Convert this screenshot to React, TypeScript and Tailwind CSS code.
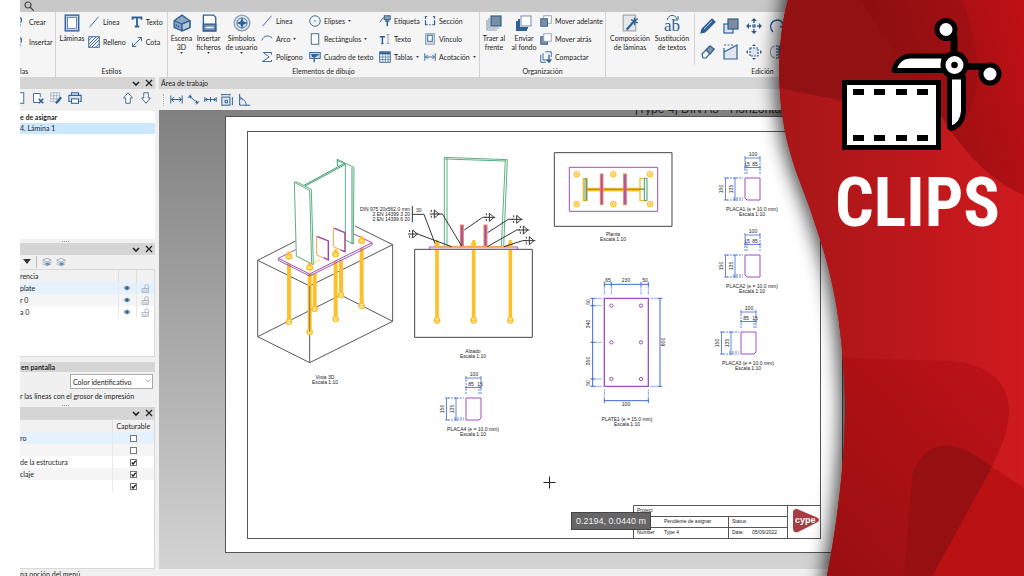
import React from 'react';

const BLUE = '#2f6096';
const SOFT = '#8c9fb5';

const glyphs: Record<string, React.ReactNode> = {
  create: (
    <>
      <path d="M2 1h6v5H2M8 3h2v5H2M2 10h6v4H2" />
      <path d="M2 8h6" />
    </>
  ),
  sheet: (
    <>
      <rect x="2" y="1" width="12" height="14" fill="#c6d3e2" />
      <rect x="4" y="3" width="8" height="10" fill="#fff" strokeWidth="0.6" />
    </>
  ),
  line: <path d="M2 15L14 1" />,
  hatch: (
    <>
      <rect x="1" y="1" width="14" height="14" />
      <path d="M1 6l5-5M1 11L11 1M1 15L15 1M5 15L15 5M10 15l5-5" />
    </>
  ),
  textT: <path d="M2 5V2h12v3M8 2v12M5 14h6" strokeWidth="2.4" />,
  arrows: <path d="M2 14L14 2M2 9v5h5M9 2h5v5" />,
  scene: (
    <>
      <path d="M1 6l7-5 7 5v6l-7 3-7-3z" fill="#8aa6c2" />
      <path d="M1 6l7 3 7-3M8 9v6M3 9v2M5 10v2" />
      <path d="M8 9l7-3v6l-7 3z" fill="#b7c8da" />
    </>
  ),
  file: (
    <>
      <path d="M3 1h9l2 2v12H3z" fill="#fff" />
      <rect x="3" y="9" width="11" height="6" fill="#6f8fb3" />
      <path d="M5 12h7" stroke="#fff" />
    </>
  ),
  compass: (
    <>
      <circle cx="8" cy="8" r="7" stroke={SOFT} fill="#dbe3ec" />
      <circle cx="8" cy="8" r="4.5" strokeWidth="0.7" />
      <path d="M8 3l1.400 3.600L13 8l-3.600 1.400L8 13l-1.400-3.600L3 8l3.600-1.400z" fill={BLUE} stroke="none" />
    </>
  ),
  arc: <path d="M1 10c3-7 9-8 14-3" />,
  polygon: <path d="M14 5V2H3l8 6-9 6h12v-2" />,
  ellipse: (
    <>
      <circle cx="8" cy="8" r="7" />
      <circle cx="8" cy="8" r="1" fill={BLUE} stroke="none" />
    </>
  ),
  rect: <rect x="3" y="1" width="10" height="14" fill="#fff" />,
  textbox: (
    <>
      <rect x="1" y="2" width="14" height="8" fill="#c9d6e4" />
      <path d="M3 5h10M7 15V7M4 7h6" strokeWidth="1.800" />
    </>
  ),
  tag: (
    <>
      <rect x="7" y="1" width="8" height="5" fill={SOFT} />
      <path d="M1 10l4-6h2" />
      <path d="M11 15V8M8 8h6" strokeWidth="2" />
    </>
  ),
  textI: (
    <>
      <path d="M1 5h7M4.500 5v9M3 14h3" strokeWidth="2" />
      <path d="M12 2v12M10 2h4M10 14h4" stroke={SOFT} />
    </>
  ),
  table: (
    <>
      <rect x="1" y="1" width="14" height="14" fill="#fff" />
      <path d="M1 3h14" strokeWidth="3" />
      <path d="M1 8h14M1 11.500h14M5 3v12M8.500 3v12M12 3v12" strokeWidth="0.8" />
    </>
  ),
  section: <path d="M4 2H2v3M12 2h2v3M2 7v6h3M14 7v6h-3M7 13h2" strokeWidth="1.600" />,
  link: (
    <>
      <rect x="2" y="1" width="12" height="14" fill="#cbd6e2" stroke={SOFT} />
      <rect x="5" y="3" width="6" height="8" fill="#fff" />
    </>
  ),
  dim: <path d="M1 3v10M15 3v10M2 8h12M5 5L2 8l3 3M11 5l3 3-3 3" />,
  front: (
    <>
      <path d="M1 5v10h10M3 3v10h10" stroke={SOFT} />
      <rect x="5" y="1" width="10" height="10" fill="#7d8c9f" />
    </>
  ),
  back: (
    <>
      <rect x="5" y="1" width="10" height="10" fill="#fff" stroke={SOFT} />
      <path d="M3 4v9h9M1 6v9h10" strokeWidth="2" />
    </>
  ),
  forward: (
    <>
      <rect x="5" y="1" width="10" height="10" fill="#fff" stroke={SOFT} />
      <rect x="1" y="5" width="9" height="10" fill="#7d8c9f" />
    </>
  ),
  backward: (
    <>
      <rect x="1" y="5" width="9" height="10" fill="#7d8c9f" />
      <rect x="5" y="1" width="10" height="10" fill="#fff" stroke={SOFT} />
    </>
  ),
  compact: (
    <>
      <path d="M1 5v10h7M4 3v9h5M7 1h8v7" />
      <path d="M12 5v8M9 11l3 4 3-4" strokeWidth="1.800" />
    </>
  ),
  compose: (
    <>
      <rect x="2" y="1" width="11" height="14" fill="#e5e7ea" stroke="#a9adb3" />
      <path d="M5 14l6-7" strokeWidth="2" />
      <path d="M12 3v7M9 5l6 3M15 4l-5 4" />
    </>
  ),
  pencil: (
    <>
      <path d="M1 15l1-4L12 1l3 3L5 14z" fill={BLUE} />
      <path d="M4 11l8-8" stroke="#fff" strokeWidth="0.700" />
    </>
  ),
  copy: (
    <>
      <rect x="1" y="6" width="9" height="9" fill="#dfe5ec" />
      <rect x="5" y="1" width="10" height="10" fill="#7d8c9f" />
    </>
  ),
  move: (
    <>
      <path d="M8 1v4M8 11v4M1 8h4M11 8h4" strokeWidth="1.500" />
      <path d="M8 0l3 3H5zM8 16l3-3H5zM0 8l3-3v6zM16 8l-3-3v6z" fill={BLUE} stroke="none" />
      <rect x="7" y="7" width="2" height="2" />
    </>
  ),
  rotate: <path d="M4 14C0 10 1 3 8 2c5 0 7 4 6 8M11 8l3 2 2-3" strokeWidth="1.400" />,
  eraser: (
    <>
      <path d="M2 10L10 2l4 3-8 9H3z" fill="#fff" />
      <path d="M6 6l4-4 4 3-4 5z" fill="#8795a6" />
    </>
  ),
  stretch: (
    <>
      <path d="M1 4v11h13V1L1 8" fill="#dfe5ec" />
      <path d="M1 1h10" strokeDasharray="2 1.500" />
    </>
  ),
  scale: (
    <>
      <rect x="4" y="4" width="8" height="8" strokeDasharray="2 1" fill="#dfe5ec" />
      <path d="M8 0l2 2H6zM8 16l2-2H6zM0 8l2-2v4zM16 8l-2-2v4z" fill={BLUE} stroke="none" />
    </>
  ),
  mirror: (
    <>
      <path d="M6 2C0 3 0 13 6 14" stroke={SOFT} />
      <path d="M8 1v14" strokeDasharray="2 1" />
      <path d="M10 2c6 1 6 11 0 12z" fill={BLUE} />
    </>
  ),
  sheetX: (
    <>
      <path d="M9 14H2V2h9v5" fill="#fff" />
      <path d="M9 9l6 6M15 9l-6 6" strokeWidth="2.200" />
    </>
  ),
  sheetEdit: (
    <>
      <path d="M1 1h12v12H1zM1 5h12M1 9h12M5 1v12M9 1v12" stroke={SOFT} strokeWidth="0.800" />
      <path d="M8 15l7-8" strokeWidth="3" />
    </>
  ),
  printer: (
    <>
      <path d="M4 5V2h8v3M3 12H1V5h14v7h-2" fill="#dfe5ec" />
      <rect x="4" y="9" width="8" height="5" fill="#fff" />
    </>
  ),
  up: <path d="M8 1l6 7h-3v7H5V8H2z" fill="#fff" />,
  down: <path d="M8 15l6-7h-3V1H5v7H2z" fill="#fff" />,
  aligned: (
    <>
      <path d="M3 4l10 8M1 6l4-4M11 14l4-4" />
      <path d="M2 3l4 1-2 3zM14 13l-4-1 2-3z" fill={BLUE} stroke="none" />
    </>
  ),
  chain: <path d="M1 5v6M8 5v6M15 5v6M1 8h14M4 6L2 8l2 2M12 6l2 2-2 2" />,
  boxDim: (
    <>
      <rect x="1" y="5" width="10" height="10" fill="#dfe5ec" />
      <path d="M1 2h10M1 1v2M11 1v2M14 5v10M5 9h3v3H5z" />
    </>
  ),
  angle: <path d="M2 1v14h13M2 7c5 0 8 3 8 8M2 4l4 4" />,
  layers: (
    <>
      <path d="M1 5l7-3 7 3-7 3zM1 8l7 3 7-3M1 11l7 3 7-3" stroke={SOFT} />
      <path d="M6 9h6v4H6z" fill={BLUE} stroke="none" opacity="0.600" />
    </>
  ),
  eye: (
    <>
      <path d="M1 8c3-5 11-5 14 0-3 5-11 5-14 0z" fill="#c4d1df" stroke={SOFT} />
      <circle cx="8" cy="8" r="3" fill={BLUE} />
    </>
  ),
  lock: (
    <>
      <path d="M2 8h11v7H2zM7 8V4c0-4 6-4 6 0v4" stroke="#8c9aab" fill="none" />
      <path d="M4 11h7v2H4z" stroke="#b8c2cd" />
    </>
  ),
};

interface IconProps {
  name: string;
  className?: string;
}

const Icon: React.FC<IconProps> = ({ name, className = 'size-3' }) => (
  <svg
    viewBox="0 0 16 16"
    className={`${className} shrink-0`}
    fill="none"
    stroke={BLUE}
    strokeWidth="1.200"
    aria-hidden="true"
  >
    {glyphs[name]}
  </svg>
);

const Caret = () => (
  <svg viewBox="0 0 4 3" className="h-[2px] w-[3px] shrink-0" aria-hidden="true">
    <path d="M0 0h4L2 3z" fill="#333" />
  </svg>
);

interface ToolProps {
  icon: string;
  label: string;
  menu?: boolean;
}

const Tool: React.FC<ToolProps> = ({ icon, label, menu }) => (
  <button type="button" className="flex h-[18px] items-center gap-[3px] whitespace-nowrap">
    <Icon name={icon} />
    {label}
    {menu && <Caret />}
  </button>
);

interface BigToolProps {
  icon: React.ReactNode;
  lines: string[];
  menu?: boolean;
  className: string;
}

const BigTool: React.FC<BigToolProps> = ({ icon, lines, menu, className }) => (
  <button
    type="button"
    className={`flex h-12 flex-col items-center whitespace-nowrap pt-[2px] leading-[9px] ${className}`}
  >
    <span className="mb-[2px] flex h-[18px] items-center">{icon}</span>
    {lines.map((line) => (
      <span key={line}>{line}</span>
    ))}
    {menu && <Caret />}
  </button>
);

interface GroupProps {
  label: string;
  className: string;
  children: React.ReactNode;
}

const Group: React.FC<GroupProps> = ({ label, className, children }) => (
  <section
    className={`flex shrink-0 flex-col justify-between overflow-hidden border-r border-[#d2d2d2] ${className}`}
  >
    <div className="flex items-start">{children}</div>
    <h2 className="h-[10px] text-center leading-[9px]">{label}</h2>
  </section>
);

const editTools = [
  ['pencil', 'Editar'],
  ['copy', 'Copiar'],
  ['move', 'Mover'],
  ['rotate', 'Girar'],
  ['eraser', 'Borrar'],
  ['stretch', 'Estirar'],
  ['scale', 'Escalar'],
  ['mirror', 'Simetría'],
];

const Ribbon = () => (
  <div className="flex h-[65px] shrink-0 overflow-hidden bg-[#f5f5f5]">
    <Group label="las" className="w-9 [&>h2]:text-left">
      <div className="-ml-[6px] flex flex-col gap-[2px] pt-px">
        <Tool icon="create" label="Crear" />
        <Tool icon="create" label="Insertar" />
      </div>
    </Group>
    <Group label="Estilos" className="w-28">
      <BigTool icon={<Icon name="sheet" className="size-[18px]" />} lines={['Láminas']} className="w-8" />
      <div className="flex flex-col gap-[2px] pt-px">
        <Tool icon="line" label="Línea" />
        <Tool icon="hatch" label="Relleno" />
      </div>
      <div className="flex flex-1 flex-col gap-[2px] pl-[5px] pt-px">
        <Tool icon="textT" label="Texto" />
        <Tool icon="arrows" label="Cota" />
      </div>
    </Group>
    <Group label="Elementos de dibujo" className="w-[312px]">
      <BigTool
        icon={<Icon name="scene" className="size-[18px]" />}
        lines={['Escena', '3D']}
        menu
        className="w-[27px]"
      />
      <BigTool
        icon={<Icon name="file" className="size-[18px]" />}
        lines={['Insertar', 'ficheros']}
        menu
        className="w-[27px]"
      />
      <BigTool
        icon={<Icon name="compass" className="size-[18px]" />}
        lines={['Símbolos', 'de usuario']}
        menu
        className="w-[39px]"
      />
      <div className="flex w-[48px] flex-col">
        <Tool icon="line" label="Línea" />
        <Tool icon="arc" label="Arco" menu />
        <Tool icon="polygon" label="Polígono" />
      </div>
      <div className="flex w-[70px] flex-col">
        <Tool icon="ellipse" label="Elipses" menu />
        <Tool icon="rect" label="Rectángulos" menu />
        <Tool icon="textbox" label="Cuadro de texto" />
      </div>
      <div className="flex w-[45px] flex-col">
        <Tool icon="tag" label="Etiqueta" />
        <Tool icon="textI" label="Texto" />
        <Tool icon="table" label="Tablas" menu />
      </div>
      <div className="flex flex-col">
        <Tool icon="section" label="Sección" />
        <Tool icon="link" label="Vínculo" />
        <Tool icon="dim" label="Acotación" menu />
      </div>
    </Group>
    <Group label="Organización" className="w-[126px]">
      <BigTool
        icon={<Icon name="front" className="size-4" />}
        lines={['Traer al', 'frente']}
        className="w-7"
      />
      <BigTool
        icon={<Icon name="back" className="size-4" />}
        lines={['Enviar', 'al fondo']}
        className="w-8"
      />
      <div className="flex flex-col">
        <Tool icon="forward" label="Mover adelante" />
        <Tool icon="backward" label="Mover atrás" />
        <Tool icon="compact" label="Compactar" />
      </div>
    </Group>
    <Group label="Edición" className="w-[314px]">
      <BigTool
        icon={<Icon name="compose" className="size-[18px]" />}
        lines={['Composición', 'de láminas']}
        className="w-12"
      />
      <BigTool
        icon={
          <svg viewBox="0 0 18 18" className="size-[18px]" aria-hidden="true">
            <path d="M4 6C6 0 12 0 14 5M15 2v4h-4" fill="none" stroke={BLUE} />
            <text x="9" y="17" textAnchor="middle" fontFamily="Liberation Serif, serif" fontSize="17" fill={BLUE}>
              ab
            </text>
          </svg>
        }
        lines={['Sustitución', 'de textos']}
        className="w-9"
      />
      <div className="ml-1 mt-px grid h-[52px] grid-cols-4 items-center gap-x-[7px] border-l border-[#d2d2d2] pl-[5px]">
        {editTools.map(([icon, label]) => (
          <button type="button" key={icon} aria-label={label}>
            <Icon name={icon} className="size-4" />
          </button>
        ))}
      </div>
    </Group>
  </div>
);

const DockHeader = () => (
  <div className="flex h-3 shrink-0 items-center justify-end gap-[5px] bg-[#d5d5d5] pr-[2px]">
    <button type="button" aria-label="Contraer">
      <svg viewBox="0 0 8 8" className="size-2" fill="none" stroke="#222" strokeWidth="1.600">
        <path d="M1 3l3 3 3-3" />
      </svg>
    </button>
    <button type="button" aria-label="Cerrar">
      <svg viewBox="0 0 8 8" className="size-2" fill="none" stroke="#222" strokeWidth="1.300">
        <path d="M1 1l6 6M7 1L1 7" />
      </svg>
    </button>
  </div>
);

const Splitter = () => (
  <div className="flex h-1 shrink-0 items-center justify-center gap-px pr-11">
    {[0, 1, 2, 3].map((dot) => (
      <span key={dot} className="size-px bg-[#999]" />
    ))}
  </div>
);

const layers = [
  { name: 'plate', row: 'bg-[#e5f1fd]' },
  { name: 'r 0', row: 'bg-[#f5f5f5]' },
  { name: 'a 0', row: 'bg-white' },
];

const captures = [
  { name: 'ro', on: false, row: 'bg-[#e5f1fd]' },
  { name: '', on: false, row: 'bg-[#f5f5f5]' },
  { name: 'de la estructura', on: true, row: 'bg-white' },
  { name: 'claje', on: true, row: 'bg-[#f5f5f5]' },
  { name: '', on: true, row: 'bg-white' },
];

const Sidebar = () => (
  <aside className="flex w-[135px] shrink-0 flex-col overflow-hidden whitespace-nowrap">
    <DockHeader />
    <div className="flex h-[22px] shrink-0 items-center gap-[6px] pb-1 pr-[3px]">
      <button type="button" aria-label="Nueva" className="-ml-[6px]">
        <Icon name="rect" />
      </button>
      <button type="button" aria-label="Borrar lámina">
        <Icon name="sheetX" />
      </button>
      <button type="button" aria-label="Editar lámina">
        <Icon name="sheetEdit" />
      </button>
      <button type="button" aria-label="Imprimir" className="mr-auto">
        <Icon name="printer" className="size-[14px]" />
      </button>
      <button type="button" aria-label="Subir">
        <Icon name="up" />
      </button>
      <button type="button" aria-label="Bajar">
        <Icon name="down" />
      </button>
    </div>
    <ul className="h-32 shrink-0 bg-white leading-[12px]">
      <li className="h-3 font-bold">e de asignar</li>
      <li className="h-[11px] bg-[#cce8ff] leading-[11px]">4. Lámina 1</li>
    </ul>
    <Splitter />
    <DockHeader />
    <div className="flex h-[14px] shrink-0 items-center gap-1 pl-[2px]">
      <button type="button" aria-label="Más">
        <svg viewBox="0 0 10 6" className="h-[6px] w-[10px]">
          <path d="M1 0h8L5 5z" fill="#333" />
        </svg>
      </button>
      <span className="mr-px h-3 w-px bg-[#bbb]" />
      <button type="button" aria-label="Capas visibles">
        <Icon name="layers" className="size-[10px]" />
      </button>
      <button type="button" aria-label="Capas ocultas">
        <Icon name="layers" className="size-[10px]" />
      </button>
    </div>
    <div className="h-[88px] shrink-0 border-b border-r border-t border-[#d8d8d8] bg-white">
      <table className="w-full table-fixed border-collapse text-left">
        <thead>
          <tr className="h-3 bg-[#f1f1f1]">
            <th className="p-0 font-normal">rencia</th>
            <th className="w-[18px] border-l border-[#ddd] p-0" />
            <th className="w-[18px] border-l border-[#ddd] p-0" />
          </tr>
        </thead>
        <tbody>
          {layers.map((layer) => (
            <tr key={layer.name} className={`h-3 ${layer.row}`}>
              <td className="p-0">{layer.name}</td>
              <td className="border-l border-[#e8e8e8] p-0">
                <Icon name="eye" className="mx-auto size-2" />
              </td>
              <td className="border-l border-[#e8e8e8] p-0">
                <Icon name="lock" className="mx-auto size-[9px]" />
              </td>
            </tr>
          ))}
        </tbody>
      </table>
    </div>
    <h2 className="mt-[5px] h-[10px] shrink-0 bg-[#d5d5d5] pl-px font-bold leading-[10px]">en pantalla</h2>
    <div className="relative mt-[2px] h-[15px] w-[85px] shrink-0 self-end pr-[2px]">
      <select
        aria-label="Color en pantalla"
        className="h-full w-full appearance-none border border-[#aaa] bg-white pl-[2px] leading-[12px]"
      >
        <option>Color identificativo</option>
      </select>
      <svg
        viewBox="0 0 8 8"
        className="pointer-events-none absolute right-1 top-1 size-[6px]"
        fill="none"
        stroke="#777"
      >
        <path d="M1 2l3 3 3-3" />
      </svg>
    </div>
    <p className="h-[14px] shrink-0 leading-[14px]">r las líneas con el grosor de impresión</p>
    <Splitter />
    <DockHeader />
    <div className="min-h-0 flex-1 border-b border-r border-t border-[#d8d8d8] bg-white">
      <table className="w-full table-fixed border-collapse text-left">
        <thead>
          <tr className="h-3 bg-[#f1f1f1]">
            <th className="p-0" />
            <th className="w-[42px] border-l border-[#ddd] p-0 text-center font-normal">Capturable</th>
          </tr>
        </thead>
        <tbody>
          {captures.map((item, i) => (
            <tr key={i} className={`h-3 ${item.row}`}>
              <td className="p-0">{item.name}</td>
              <td className="border-l border-[#e8e8e8] p-0">
                <span className="grid place-items-center">
                  <input
                    type="checkbox"
                    defaultChecked={item.on}
                    aria-label={`Capturable ${item.name}`}
                    className="peer col-start-1 row-start-1 size-[7px] appearance-none border border-[#777] bg-white"
                  />
                  <svg
                    viewBox="0 0 8 8"
                    className="pointer-events-none invisible col-start-1 row-start-1 size-[7px] peer-checked:visible"
                    fill="none"
                    stroke="#222"
                    strokeWidth="1.500"
                  >
                    <path d="M2 4l1.500 2L6.500 2" />
                  </svg>
                </span>
              </td>
            </tr>
          ))}
        </tbody>
      </table>
    </div>
  </aside>
);

interface PlateProps {
  x: number;
  y: number;
  name: string;
  right?: boolean;
}

const PlateDetail: React.FC<PlateProps> = ({ x, y, name, right }) => (
  <g transform={`translate(${x} ${y})`}>
    <path
      d={right ? 'M0 0H15V20L13 22H0Z' : 'M0 0H15V22H2L0 20Z'}
      fill="none"
      stroke="#a04fc0"
    />
    <g stroke="#3c67d6" strokeWidth="0.800">
      <path d="M0-20H15M0-10.500H15M0-22v4M15-22v4M0-12v3M15-12v3" />
      <path d="M-19.500 0V22M-10 0V22M-21 0h4M-21 22h4M-11.500 0h3M-11.500 22h3" />
      <path d="M0-18v15M15-18v15M-18 0h16M-18 22h16M-12 20h10" strokeDasharray="2 1" />
      <path d={right ? 'M13-12v9' : 'M2-12v9'} strokeDasharray="2 1" />
    </g>
    <g textAnchor="middle">
      <text x="8" y="-22">100</text>
      <text x={right ? 5 : 10} y="-12">85</text>
      <text x={right ? 14 : 2} y="-12">15</text>
      <text transform="translate(-22 11) rotate(-90)">150</text>
      <text transform="translate(-12 11) rotate(-90)">135</text>
      <text x="7" y="33">{name}</text>
      <text x="7" y="38">Escala 1:10</text>
    </g>
  </g>
);

const rods = [
  [303, 360, 465],
  [147, 360, 545],
  [224, 400, 507],
  [287, 350, 537],
  [365, 315, 497],
  [209, 400, 576],
];

const welds = [
  [103, 222],
  [38, 282],
  [268, 232],
  [350, 238],
  [370, 270],
  [388, 302],
];

const Sheet = () => (
  <svg
    viewBox="226 117 616 435"
    className="block h-auto w-full"
    fill="none"
    fontFamily="Liberation Sans, Arial, sans-serif"
    role="img"
    aria-label="Lámina 1"
  >
    <g fill="#222" fontSize="5" stroke="none">
      <g textAnchor="middle">
        <text x="325" y="379">Vista 3D</text>
        <text x="325" y="384">Escala 1:10</text>
        <text x="473" y="353">Alzado</text>
        <text x="473" y="358">Escala 1:10</text>
        <text x="613" y="236">Planta</text>
        <text x="613" y="241">Escala 1:10</text>
        <text x="627" y="421">PLATE1 (e = 15.0 mm)</text>
        <text x="627" y="426">Escala 1:10</text>
        <text x="608" y="282">65</text>
        <text x="626" y="282">230</text>
        <text x="645" y="282">50</text>
        <text x="626" y="406">100</text>
        <text transform="translate(590 302) rotate(-90)">50</text>
        <text transform="translate(590 324) rotate(-90)">340</text>
        <text transform="translate(590 361) rotate(-90)">350</text>
        <text transform="translate(590 383) rotate(-90)">50</text>
        <text transform="translate(665 342) rotate(-90)">600</text>
      </g>
      <g textAnchor="end">
        <text x="410" y="211">DIN 975 20x562.0 mm</text>
        <text x="410" y="216">2 EN 14399 3 20</text>
        <text x="410" y="221">2 EN 14399 6 20</text>
      </g>
      <text x="416" y="212">30</text>
      <text x="637" y="512">Project</text>
      <text x="664" y="523">Pendiente de asignar</text>
      <text x="732" y="523">Status</text>
      <text x="637" y="534">Number</text>
      <text x="664" y="534">Type 4</text>
      <text x="732" y="534">Date:</text>
      <text x="752" y="534">05/09/2022</text>
      <PlateDetail x={745} y={178} name="PLACA1 (e = 10.0 mm)" />
      <PlateDetail x={745} y={255} name="PLACA2 (e = 10.0 mm)" />
      <PlateDetail x={741} y={332} name="PLACA3 (e = 10.0 mm)" right />
      <PlateDetail x={466} y={398} name="PLACA4 (e = 10.0 mm)" right />
    </g>

    {/* frame and title block */}
    <g stroke="#555">
      <rect x="247.500" y="131.500" width="573" height="407" />
      <path d="M633.500 538V505.500H820M633.500 516.500H787.500M633.500 527.500H787.500M787.500 505V538M728.500 516V538" />
      <path d="M543.500 482.500h12M549.500 476.500v12" stroke="#222" />
    </g>
    <path
      d="M797 509c-3 0-4 1-4 4v15c0 4 2 5 5 4l18-9c4-2 4-4 0-6z"
      fill="#a83c42"
    />
    <text x="795" y="523" fontSize="9" fontWeight="700" fill="#fff">cype</text>

    {/* 3D view */}
    <g transform="translate(240 140) scale(.33333)" strokeWidth="3">
      <path
        d="M167 303L53 361V590L209 668L458 544V314L345 258M53 361L209 438L458 314M209 438V668M53 590L302 465L458 544"
        stroke="#555"
      />
      {rods.map(([x, top, bottom]) => (
        <g key={x} stroke="#fcc02c">
          <path d={`M${x} ${top}V${bottom}`} strokeWidth="12" />
          <circle cx={x} cy={bottom} r="8" fill="#fff3c4" strokeWidth="4" />
          <path d={`M${x - 8} ${bottom}h16`} />
        </g>
      ))}
      <path d="M115 355L302 262L396 308L209 402Z" fill="#fff" stroke="none" />
      <path d="M167 329L115 355L209 402L396 308L342 282M115 355v6L209 408L396 315v-7M209 402v6" stroke="#a04fc0" />
      <path d="M209 438V576" stroke="#8a7440" />
      <path d="M169 348L215 372L240 360M316 300L340 312M230 345L250 336" stroke="#fcc02c" strokeWidth="2" />
      <path d="M292 58L342 82L340 312L316 300V72L292 62Z" fill="#fff" stroke="#5bb082" />
      <path d="M336 82V312M292 58v20M190 137L313 70M194 139L316 73" stroke="#3f9b68" />
      <path d="M163 127L168 125L214 148L220 374L169 348Z" fill="#fff" stroke="#5bb082" />
      <path d="M163 127L209 151L215 372" stroke="#5bb082" />
      <path d="M230 345V288L265 303V360ZM280 320V263L315 278V335Z" fill="#fff" stroke="#f4a54b" />
      <path d="M232 290L265 303V360L252 353M283 265L315 278V335L302 330" stroke="#9b45ae" strokeWidth="4" />
      {[
        [147, 347],
        [209, 380],
        [287, 340],
        [365, 300],
      ].map(([x, y]) => (
        <g key={x} stroke="#fcc02c">
          <path d={`M${x} ${y - 12}v14`} strokeWidth="10" />
          <ellipse cx={x} cy={y + 3} rx="9" ry="7" fill="#ffe07a" strokeWidth="4" />
        </g>
      ))}
    </g>

    {/* elevation and plan */}
    <g transform="translate(400 140) scale(.33333)" strokeWidth="3">
      <path d="M44 328H397V592H44Z" stroke="#444" />
      <path d="M133 320V52L322 59L311 320M141 320V54M316 60L304 320M133 57L316 63" stroke="#5bb082" />
      <path d="M88 321H353V328H88Z" stroke="#a04fc0" />
      <path d="M105 319H325" stroke="#f4a54b" />
      {[111, 221, 331].map((x) => (
        <g key={x} stroke="#fcc02c">
          <path d={`M${x} 330V534`} strokeWidth="11" />
          <path d={`M${x} 300V320`} strokeWidth="8" />
          <circle cx={x} cy="313" r="6" strokeWidth="4" />
          <circle cx={x} cy="541" r="8" fill="#fff3c4" strokeWidth="4" />
          <path d={`M${x - 10} 541h20`} />
        </g>
      ))}
      {[181, 252].map((x) => (
        <rect key={x} x={x} y="255" width="9" height="63" fill="#a64fb0" stroke="#e9875a" />
      ))}
      <path
        d="M37 198V247M37 223H72L105 310M118 222H127L185 318M55 283L155 320M260 232H248L193 270M340 238H325L263 278M360 270H350L262 320M380 302H368L312 320"
        stroke="#333"
      />
      {welds.map(([x, y]) => (
        <path
          key={x}
          d={`M${x - 14} ${y}h32M${x} ${y - 12}v24l14-12zM${x - 9} ${y - 12}v6M${x - 9} ${y + 5}v6`}
          stroke="#333"
        />
      ))}

      <path d="M463 38H816V259H463Z" stroke="#444" />
      <path d="M508 82H773V214H508Z" stroke="#a04fc0" />
      {[530, 640, 750].map((x) => (
        <g key={x} stroke="#fcc94a" strokeWidth="4">
          <circle cx={x} cy="103" r="8" />
          <circle cx={x} cy="192" r="8" />
          <circle cx={x} cy="103" r="3" />
          <circle cx={x} cy="192" r="3" />
        </g>
      ))}
      <path d="M550 115H561V182H550ZM718 115H735M720 115V182H735M561 145H730M561 152H720" stroke="#fcb92c" strokeWidth="4" />
      <path d="M555 115V182M560 115V182M733 115H741V182H733ZM561 148H735" stroke="#3f9b68" />
      {[601, 671].map((x) => (
        <rect key={x} x={x} y="102" width="8" height="92" fill="#a64fb0" stroke="#e9875a" />
      ))}
    </g>

    {/* base plate */}
    <g transform="translate(540 260) scale(.33333)" strokeWidth="3">
      <path d="M193 115H325V379H193Z" stroke="#a04fc0" strokeWidth="4" />
      {[137, 247, 357].map((y) => (
        <g key={y} stroke="#a04fc0">
          <circle cx="214" cy={y} r="5" />
          <circle cx="303" cy={y} r="5" />
        </g>
      ))}
      <g stroke="#3c67d6" strokeWidth="2">
        <path
          d="M193 73H325M193 66v14M214 66v14M303 66v14M325 66v14M158 115V379M151 115h14M151 137h14M151 247h14M151 357h14M151 379h14M360 115V379M353 115h14M353 379h14M193 422H325M193 415v14M325 415v14"
          strokeWidth="3"
        />
        <path
          d="M193 80v25M214 80v25M303 80v25M325 80v25M165 115h20M165 137h20M165 247h20M165 357h20M165 379h20M333 115h20M333 379h20M193 388v28M325 388v28"
          strokeDasharray="6 2"
        />
      </g>
    </g>
  </svg>
);

const Workspace = () => (
  <main className="flex min-w-0 flex-1 flex-col">
    <h2 className="h-3 shrink-0 bg-[#d5d5d5] pl-[2px] leading-[12px]">Área de trabajo</h2>
    <div className="flex h-[21px] shrink-0 items-center gap-1 bg-[#f0f0f0] pl-1">
      <span className="mr-[2px] h-3 border-l border-dotted border-[#aaa]" />
      {[
        ['dim', 'Horizontal'],
        ['aligned', 'Alineada'],
        ['chain', 'Continua'],
        ['boxDim', 'Contorno'],
        ['angle', 'Angular'],
      ].map(([icon, label]) => (
        <button type="button" key={icon} aria-label={label}>
          <Icon name={icon} className="size-[13px]" />
        </button>
      ))}
    </div>
    <div className="relative min-h-0 flex-1 overflow-hidden bg-linear-to-b from-[#808080] to-[#d4d4d4] pl-[66px] pt-[6px]">
      <div className="absolute left-[476px] top-0 h-[5px] overflow-hidden whitespace-nowrap font-['Liberation_Sans',Arial,sans-serif] text-[12px] text-[#222]">
        <p className="-mt-[8px] leading-[14px]">[Type 4] DIN A3 - Horizontal [</p>
      </div>
      <div className="relative w-[618px] border border-[#555] bg-white">
        <Sheet />
        <p className="absolute bottom-[22px] left-[345px] whitespace-nowrap border border-[#444] bg-[#666] px-1 font-['Liberation_Sans',Arial,sans-serif] text-[9px] leading-[16px] text-[#f0f0f0]">
          0.2194, 0.0440 m
        </p>
      </div>
    </div>
  </main>
);

const wave =
  'M788 0C778 35 777 85 783 120C790 165 805 190 817 230C834 280 843 330 845 400C846 460 836 530 827 576H1024V0Z';

const Banner = () => (
  <div className="pointer-events-none absolute inset-y-0 right-0 w-[300px]">
    <svg viewBox="724 0 300 576" preserveAspectRatio="xMaxYMin slice" className="h-full w-full" aria-hidden="true">
      <defs>
        <linearGradient id="base" x1="0" x2="1" y1="0" y2="0">
          <stop offset="0" stopColor="#a51617" />
          <stop offset="1" stopColor="#cf1a1f" />
        </linearGradient>
        <linearGradient id="top" x1="0" x2="1" y1="0.300" y2="0">
          <stop offset="0" stopColor="#8a1011" />
          <stop offset="1" stopColor="#c01015" />
        </linearGradient>
        <linearGradient id="low" x1="0" x2="1" y1="1" y2="0">
          <stop offset="0" stopColor="#960f11" />
          <stop offset="1" stopColor="#be1217" />
        </linearGradient>
        <clipPath id="edge">
          <path d={wave} />
        </clipPath>
        <filter id="shade" x="-30%" y="-10%" width="140%" height="120%">
          <feDropShadow dx="-5" dy="0" stdDeviation="9" floodColor="#000" floodOpacity="0.700" />
        </filter>
      </defs>
      <path d="M788-40V0C778 35 777 85 783 120C790 165 805 190 817 230C834 280 843 330 845 400C846 460 836 530 827 576V616H1064V-40Z" fill="#a51617" filter="url(#shade)" />
      <g clipPath="url(#edge)">
        <path d="M770 0H1024V576H770Z" fill="url(#base)" />
        <path d="M770 0H880L941 116L900 112L779 88Z" fill="#921112" />
        <path d="M860 0L912 77L941 116C965 155 995 184 1024 195V0Z" fill="url(#top)" />
        <path d="M963 0C975 40 985 75 970 110C965 125 950 122 941 116L912 77L860 0Z" fill="#8a0f10" opacity="0.350" />
        <path d="M830 357L950 361C990 363 1010 385 1009 412C1009 430 1000 450 992 467L935 576H800Z" fill="url(#low)" />
        <path d="M992 467L1024 488V576H932Z" fill="#b91014" />
        <path d="M904 576L912 480C915 455 935 443 950 446C965 447 982 460 992 467L932 576Z" fill="#960f11" />
      </g>
      <g fill="#fff" stroke="#000" strokeWidth="5">
        <rect x="844.500" y="82.500" width="94" height="65" />
        <path d="M954 35V60M960 66.500H985" strokeWidth="7" />
        <path d="M894 70.500C896 62 902 56 911 56H944V70.500Z" strokeLinejoin="round" />
        <path d="M949.500 77H963.500V111C963 120 959 126 951 128.500L949.500 127Z" strokeLinejoin="round" />
        <circle cx="946" cy="29.500" r="9" />
        <circle cx="990" cy="74" r="9" />
        <circle cx="954.500" cy="65" r="11.500" />
        <circle cx="954.500" cy="65" r="3.300" fill="#000" stroke="none" />
        <path d="M853 92h11M874 92h11M896 92h11M917 92h11M853 138h11M874 138h11M896 138h11M917 138h11" strokeWidth="6" />
      </g>
    </svg>
    <h1 className="absolute right-6 top-[164px] font-['Roboto_Condensed',Roboto,sans-serif] text-[68px] font-bold leading-[78px] text-white">
      CLIPS
    </h1>
  </div>
);

const App = () => (
  <div className="relative flex h-screen flex-col overflow-hidden bg-white pl-5 font-[Lato,'Open_Sans',sans-serif] text-[7px] text-[#222]">
    <header className="flex h-3 shrink-0 items-center bg-[#c8c8c8]">
      <button type="button" aria-label="Buscar" className="ml-1">
        <svg viewBox="0 0 10 10" className="size-[10px]" fill="none" stroke="#444" strokeWidth="1.200">
          <circle cx="4" cy="4" r="3" />
          <path d="M6 6l4 4" />
        </svg>
      </button>
    </header>
    <Ribbon />
    <div className="flex min-h-0 flex-1 gap-1 bg-[#f0f0f0]">
      <Sidebar />
      <Workspace />
    </div>
    <footer className="h-[7px] shrink-0 overflow-hidden bg-[#f0f0f0] leading-[10px]">na opción del menú.</footer>
    <Banner />
  </div>
);

export default App;
